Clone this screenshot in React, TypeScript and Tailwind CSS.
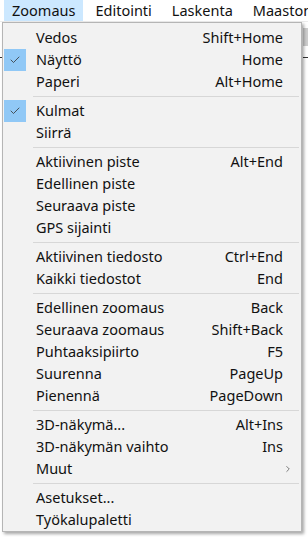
import { Check, ChevronRight } from 'lucide-react';

type Item =
  | { label: string; shortcut?: string; checked?: boolean; submenu?: boolean }
  | 'sep';

const items: Item[] = [
  { label: 'Vedos', shortcut: 'Shift+Home' },
  { label: 'Näyttö', shortcut: 'Home', checked: true },
  { label: 'Paperi', shortcut: 'Alt+Home' },
  'sep',
  { label: 'Kulmat', checked: true },
  { label: 'Siirrä' },
  'sep',
  { label: 'Aktiivinen piste', shortcut: 'Alt+End' },
  { label: 'Edellinen piste' },
  { label: 'Seuraava piste' },
  { label: 'GPS sijainti' },
  'sep',
  { label: 'Aktiivinen tiedosto', shortcut: 'Ctrl+End' },
  { label: 'Kaikki tiedostot', shortcut: 'End' },
  'sep',
  { label: 'Edellinen zoomaus', shortcut: 'Back' },
  { label: 'Seuraava zoomaus', shortcut: 'Shift+Back' },
  { label: 'Puhtaaksipiirto', shortcut: 'F5' },
  { label: 'Suurenna', shortcut: 'PageUp' },
  { label: 'Pienennä', shortcut: 'PageDown' },
  'sep',
  { label: '3D-näkymä...', shortcut: 'Alt+Ins' },
  { label: '3D-näkymän vaihto', shortcut: 'Ins' },
  { label: 'Muut', submenu: true },
  'sep',
  { label: 'Asetukset...' },
  { label: 'Työkalupaletti' },
];

const menus = ['Zoomaus', 'Editointi', 'Laskenta', 'Maastomalli'];

export default function App() {
  return (
    <div
      className="relative w-[308px] h-[537px] overflow-hidden bg-white text-[14.5px] text-[#111]"
      style={{ fontFamily: '"Segoe UI", "Noto Sans", sans-serif' }}
    >
      {/* Menu bar */}
      <div className="flex h-[22px] items-stretch gap-[4px] border-b border-[#ececec] pl-[4px] whitespace-nowrap">
        {menus.map((m, i) => (
          <div
            key={m}
            className={`flex items-center px-[8px] ${i === 0 ? 'bg-[#cce8ff]' : ''}`}
          >
            {m}
          </div>
        ))}
      </div>

      {/* Things behind the dropdown */}
      <div className="absolute left-[303px] top-[28px] w-[5px] h-[18px] bg-[#cdcdcd]" />
      <div className="absolute left-[303px] top-[57px] w-[5px] h-px bg-[#333]" />
      <div className="absolute left-0 top-[57px] w-[3px] h-px bg-[#333]" />

      {/* Dropdown */}
      <div className="absolute left-[2px] top-[22px] w-[300px] border border-[#b5b5b5] bg-[#f2f2f2] pt-[4px] shadow-[2px_2px_3px_rgba(0,0,0,0.35)]">
        {items.map((it, i) =>
          it === 'sep' ? (
            <div key={i} className="flex h-[7px] items-center pl-[30px] pr-[2px]">
              <div className="h-px w-full bg-[#d7d7d7]" />
            </div>
          ) : (
            <div key={i} className="flex h-[22px] items-center whitespace-nowrap">
              <div className="flex w-[33px] justify-start pl-[1px]">
                {it.checked && (
                  <div className="flex h-[22px] w-[22px] items-center justify-center bg-[#90c8f6]">
                    <Check size={12} strokeWidth={1.6} color="#333" />
                  </div>
                )}
              </div>
              <span className="flex-1">{it.label}</span>
              <span className="pr-[18px]">{it.shortcut}</span>
              {it.submenu && (
                <ChevronRight size={10} strokeWidth={1.5} className="mr-[8px] text-[#333]" />
              )}
            </div>
          )
        )}
      </div>
    </div>
  );
}
